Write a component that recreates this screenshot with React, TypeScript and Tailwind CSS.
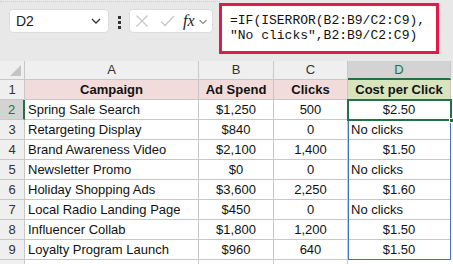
import React from "react";

const rows: [string, string, string, string, boolean][] = [
  ["Spring Sale Search", "$1,250", "500", "$2.50", true],
  ["Retargeting Display", "$840", "0", "No clicks", false],
  ["Brand Awareness Video", "$2,100", "1,400", "$1.50", true],
  ["Newsletter Promo", "$0", "0", "No clicks", false],
  ["Holiday Shopping Ads", "$3,600", "2,250", "$1.60", true],
  ["Local Radio Landing Page", "$450", "0", "No clicks", false],
  ["Influencer Collab", "$1,800", "1,200", "$1.50", true],
  ["Loyalty Program Launch", "$960", "640", "$1.50", true],
];

const cols = "grid grid-cols-[25px_174px_75px_74px_103px_2px]";
const cell = "h-[20px] border-r border-b border-[#c8c8c8] flex items-center overflow-hidden whitespace-nowrap";

export default function App() {
  return (
    <div
      className="w-[453px] h-[264px] overflow-hidden bg-white text-[#111] relative"
      style={{ fontFamily: '"Liberation Sans", Arial, sans-serif' }}
    >
      {/* Formula bar */}
      <div className="h-[61px] bg-[#e8e8e8] relative flex items-start">
        <div className="absolute left-0 top-[1px] w-[220px] border-t border-dotted border-[#cfcfcf]" />
        <div className="mt-[9px] ml-[9px] w-[100px] h-[24px] bg-white rounded-[4px] border border-[#dcdcdc] flex items-center justify-between pl-[6px] pr-[6px]">
          <span className="text-[14px] text-[#222]">D2</span>
          <svg width="12" height="8" viewBox="0 0 12 8" fill="none">
            <path d="M2 2l4 4 4-4" stroke="#333" strokeWidth="1.3" />
          </svg>
        </div>
        <div className="mt-[16px] ml-[9px] flex flex-col gap-[2px]">
          <div className="w-[3px] h-[3px] bg-[#333]" />
          <div className="w-[3px] h-[3px] bg-[#333]" />
          <div className="w-[3px] h-[3px] bg-[#333]" />
        </div>
        <div className="mt-[9px] ml-[8px] w-[84px] h-[24px] bg-white rounded-[4px] border border-[#dcdcdc] flex items-center pl-[5px]">
          <svg width="14" height="14" viewBox="0 0 14 14" fill="none">
            <path d="M1.5 1.5l11 11M12.5 1.5l-11 11" stroke="#c8c8c8" strokeWidth="1.3" />
          </svg>
          <svg className="ml-[11px]" width="15" height="12" viewBox="0 0 15 12" fill="none">
            <path d="M1 6.5l4 4 9-9.5" stroke="#c8c8c8" strokeWidth="1.3" />
          </svg>
          <span
            className="ml-[8px] text-[16px] italic text-[#222] leading-none"
            style={{ fontFamily: '"Liberation Serif", "Times New Roman", serif' }}
          >
            fx
          </span>
          <svg className="ml-[3px]" width="10" height="7" viewBox="0 0 10 7" fill="none">
            <path d="M1.5 2l3.5 3.5L8.5 2" stroke="#888" strokeWidth="1.1" />
          </svg>
        </div>
        <div className="mt-[3px] ml-[6px] w-[220px] h-[51px] bg-white border-[3px] border-[#e3194b] pl-[8px] pt-[7px]">
          <div
            className="text-[13px] leading-[15px] text-[#111] whitespace-pre"
            style={{ fontFamily: '"Liberation Mono", "Courier New", monospace' }}
          >
            {"=IF(ISERROR(B2:B9/C2:C9),\n\"No clicks\",B2:B9/C2:C9)"}
          </div>
        </div>
      </div>

      {/* Grid */}
      <div className={cols}>
        {/* column headers */}
        <div className="h-[19px] bg-[#efefef] border-r border-b border-[#c8c8c8] relative overflow-hidden">
          <svg className="absolute right-[3px] bottom-[3px]" width="11" height="11" viewBox="0 0 11 11">
            <path d="M11 0L11 11L0 11Z" fill="#c4c4c4" />
          </svg>
        </div>
        {["A", "B", "C"].map((c) => (
          <div key={c} className="h-[19px] bg-[#efefef] border-r border-b border-[#c8c8c8] flex items-center justify-center text-[13px] text-[#333]">
            {c}
          </div>
        ))}
        <div className="h-[19px] bg-[#d3d3d3] border-r border-[#c8c8c8] border-b-2 border-b-[#217346] flex items-center justify-center text-[13px] text-[#217346]">
          D
        </div>
        <div className="h-[19px] bg-[#e8e8e8]" />

        {/* row 1 */}
        <div className={`${cell} bg-[#efefef] justify-center text-[13px] text-[#333]`}>1</div>
        <div className={`${cell} bg-[#f2dcdb] justify-center font-bold text-[13px]`}>Campaign</div>
        <div className={`${cell} bg-[#f2dcdb] justify-center font-bold text-[13px]`}>Ad Spend</div>
        <div className={`${cell} bg-[#f2dcdb] justify-center font-bold text-[13px]`}>Clicks</div>
        <div className={`${cell} bg-[#d8e4bc] justify-center font-bold text-[13px]`}>Cost per Click</div>
        <div className="h-[20px] bg-white" />

        {rows.map((r, i) => {
          const n = i + 2;
          const sel = n === 2;
          return (
            <React.Fragment key={n}>
              <div
                className={
                  sel
                    ? "h-[20px] bg-[#d3d3d3] border-b border-[#c8c8c8] border-r-2 border-r-[#217346] flex items-center justify-center text-[13px] text-[#217346]"
                    : `${cell} bg-[#efefef] justify-center text-[13px] text-[#333]`
                }
              >
                {n}
              </div>
              <div className={`${cell} pl-[3px] text-[13px]`}>{r[0]}</div>
              <div className={`${cell} justify-center text-[13px]`}>{r[1]}</div>
              <div className={`${cell} justify-center text-[13px]`}>{r[2]}</div>
              <div className={`${cell} ${r[4] ? "justify-center" : "pl-[3px]"} text-[13px]`}>{r[3]}</div>
              <div className="h-[20px] bg-white" />
            </React.Fragment>
          );
        })}
        <div className="h-[10px] bg-[#efefef] border-r border-[#c8c8c8]" />
        <div className="h-[10px] border-r border-[#c8c8c8]" />
        <div className="h-[10px] border-r border-[#c8c8c8]" />
        <div className="h-[10px] border-r border-[#c8c8c8]" />
        <div className="h-[10px]" />
        <div className="h-[10px]" />
      </div>

      {/* spill range border */}
      <div className="absolute left-[348px] top-[100px] w-[103px] h-[160px] border border-[#4472c4] pointer-events-none" />
      {/* active cell */}
      <div className="absolute left-[347px] top-[99px] w-[105px] h-[22px] border-2 border-[#217346] pointer-events-none" />
      <div className="absolute left-[449px] top-[118px] w-[5px] h-[5px] bg-[#217346] border border-white pointer-events-none" />
    </div>
  );
}
